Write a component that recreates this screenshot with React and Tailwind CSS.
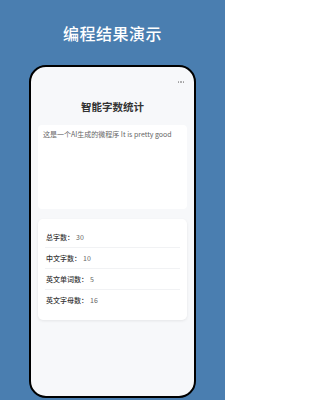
import React from "react";

const stats = [
  { label: "总字数：", value: "30" },
  { label: "中文字数：", value: "10" },
  { label: "英文单词数：", value: "5" },
  { label: "英文字母数：", value: "16" },
];

const App = () => {
  return (
    <div
      className="w-[225px] h-[400px] bg-[#4a7eb0] flex flex-col items-center overflow-hidden"
      style={{ fontFamily: '"Noto Sans CJK SC", "Noto Sans", sans-serif' }}
    >
      {/* Page heading */}
      <div className="mt-[22px] h-[22px] leading-[22px] text-[16px] tracking-[0.5px] font-medium text-white">
        编程结果演示
      </div>

      {/* Phone frame */}
      <div className="mt-[21px] w-[167px] h-[333px] shrink-0 border-2 border-black rounded-[17px] bg-[#f7f8fa] flex flex-col">
        <div className="h-[15px] mt-[12px] flex justify-end pr-[10px]">
          <div className="flex gap-[1px] items-center h-[6px]">
            <span className="w-[1.5px] h-[1.5px] rounded-full bg-[#999]" />
            <span className="w-[1.5px] h-[1.5px] rounded-full bg-[#999]" />
            <span className="w-[1.5px] h-[1.5px] rounded-full bg-[#999]" />
          </div>
        </div>

        {/* App title */}
        <div className="mt-[6px] text-center text-[10.5px] leading-[14px] font-semibold text-[#333]">
          智能字数统计
        </div>

        {/* Input box */}
        <div className="mx-[7px] mt-[11px] h-[84px] bg-white rounded-[4px] px-[5px] pt-[3px]">
          <p className="text-[7px] leading-[12px] text-[#666] whitespace-nowrap">
            这是一个AI生成的微程序 It is pretty good
          </p>
        </div>

        {/* Stats card */}
        <div className="mx-[7px] mt-[10px] bg-white rounded-[5px] shadow-[0_1px_3px_rgba(0,0,0,0.08)] pt-[8px] pb-[9px] px-[7px]">
          {stats.map((s, i) => (
            <div
              key={s.label}
              className={
                "h-[21px] flex items-center pl-[1px] " +
                (i < stats.length - 1 ? "border-b border-[#f1f2f4]" : "")
              }
            >
              <span className="text-[7px] font-medium text-[#333]">{s.label}</span>
              <span className="ml-[2px] text-[7px] text-[#666]">{s.value}</span>
            </div>
          ))}
        </div>
      </div>
    </div>
  );
};

export default App;
